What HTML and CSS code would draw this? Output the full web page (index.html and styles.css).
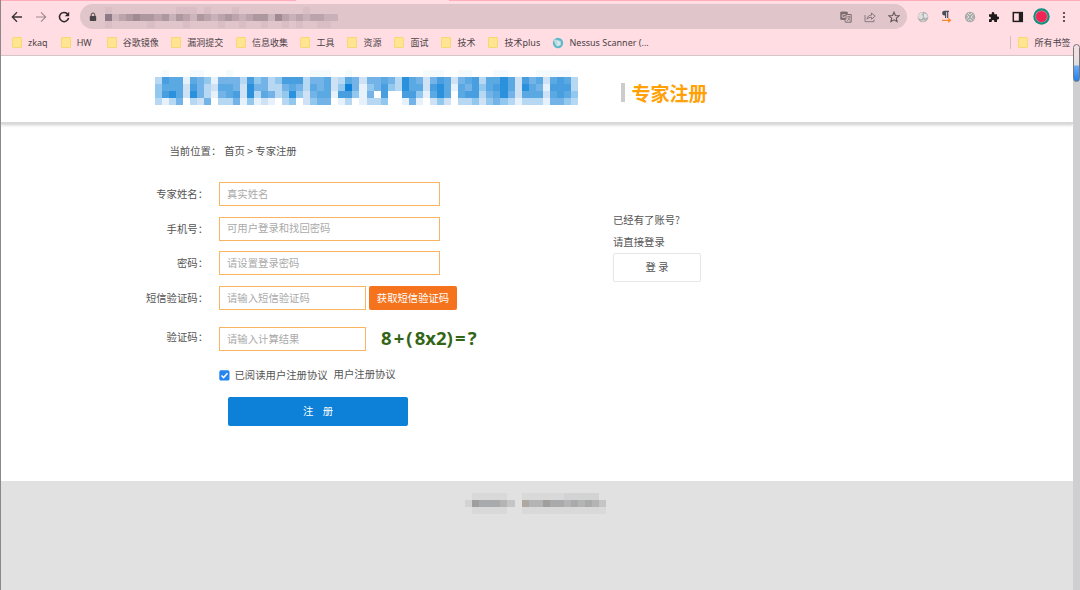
FILE: index.html
```html
<!DOCTYPE html>
<html lang="zh-CN">
<head>
  <meta charset="utf-8">
  <title>专家注册</title>
  <link rel="stylesheet" href="styles.css">
</head>
<body>
  <div class="browser">
    <div class="tab-edge"></div>
    <div class="toolbar">
      <svg class="nav" width="12" height="12" viewBox="0 0 12 12"><path d="M11 6H1.5M6 1.3L1.3 6L6 10.7" fill="none" stroke="#3a3236" stroke-width="1.3"/></svg>
      <svg class="nav" width="12" height="12" viewBox="0 0 12 12"><path d="M1 6H10.5M6 1.3L10.7 6L6 10.7" fill="none" stroke="#a08c92" stroke-width="1.2"/></svg>
      <svg class="nav" width="12" height="12" viewBox="0 0 12 12"><path d="M9.8 3.3A4.6 4.6 0 1 0 10.6 7" fill="none" stroke="#2f292c" stroke-width="1.5"/><path d="M11.2 0.8V5.2H6.8z" fill="#2f292c"/></svg>
      <div class="address">
        <svg width="8" height="10" viewBox="0 0 8 10"><rect x="0.8" y="4" width="6.4" height="5" rx="0.8" fill="#4a4347"/><path d="M2.2 4.5V2.8a1.8 1.8 0 0 1 3.6 0V4.5" fill="none" stroke="#4a4347"/></svg>
        <svg class="mosaic" id="url" width="240" height="25"></svg>
        <div class="address-icons">
          <svg width="12" height="12" viewBox="0 0 12 12"><rect x="0.5" y="0.7" width="7.3" height="8" rx="0.8" fill="#7a6d71"/><path d="M5.5 3.5H11.2V11.2H5.5L4.8 9" fill="#e0c5cb" stroke="#7a6d71"/><rect x="0.5" y="0.7" width="6" height="8" rx="0.8" fill="#7a6d71"/><text x="1.4" y="7" class="tr-g">G</text><path d="M7 5.8H10.5M8.8 4.8V6M9.8 6C9.2 8 8.4 9 7 9.8M7.8 7L10.3 9.8" fill="none" stroke="#7a6d71" stroke-width="0.8"/></svg>
          <svg width="12" height="12" viewBox="0 0 12 12"><path d="M1 4V10.7H10V8.5" fill="none" stroke="#8a7b80"/><path d="M3 8.2C3.3 5.5 5 4.2 7.5 4.1V2L11.2 5.2L7.5 8.2V6.3C5.5 6.2 4.2 6.8 3 8.2z" fill="none" stroke="#7a6d71" stroke-width="0.9"/></svg>
          <svg width="12" height="12" viewBox="0 0 12 12"><path d="M6 1.2L7.4 4.5L11 4.8L8.3 7.1L9.1 10.7L6 8.8L2.9 10.7L3.7 7.1L1 4.8L4.6 4.5z" fill="none" stroke="#62575b" stroke-width="1.1"/></svg>
        </div>
      </div>
      <div class="extensions">
        <svg width="12" height="12" viewBox="0 0 12 12"><circle cx="6" cy="6" r="5.3" fill="#b0afb0"/><path d="M1.2 4C3 1.5 5 1 6 1.2L5 4L6.5 6L4 8.5L1.3 7z" fill="#dedede"/><path d="M7 2.2L10 3.5L10.8 6L8 7.5L6.8 5z" fill="#e4e4e4"/><path d="M4 9.2L7.5 8.5L8.5 10L5.5 11z" fill="#ccc"/></svg>
        <svg width="12" height="13" viewBox="0 0 12 13"><path d="M9 0.8H4.5A2.4 2.4 0 0 0 4.5 5.6H5V8H6.2V1.9H7.1V8H8.3V1.9H9z" fill="#47505a"/><path d="M2 10.3H10.2M8.2 8.4L10.4 10.3L8.2 12.2" fill="none" stroke="#f78b28" stroke-width="1.3"/></svg>
        <svg width="12" height="12" viewBox="0 0 12 12"><circle cx="6" cy="6" r="5.2" fill="#a9aaa9"/><path d="M2.5 3.8L5 6L2.5 8.2M9.5 3.8L7 6L9.5 8.2M4 2.3L6 3.7L8 2.3M4 9.7L6 8.3L8 9.7" fill="none" stroke="#e0e0e0"/></svg>
        <svg width="12" height="12" viewBox="0 0 12 12"><path d="M1 3.2H3.7V2.4a1.3 1.3 0 0 1 2.6 0V3.2H9V5.6H9.7a1.4 1.4 0 0 1 0 2.8H9V11H6.3V10.2a1.3 1.3 0 0 0-2.6 0V11H1V8.3H1.6a1.3 1.3 0 0 0 0-2.6H1z" fill="#1f1b1d"/></svg>
        <svg width="12" height="12" viewBox="0 0 12 12"><rect x="1.3" y="1.6" width="9" height="8.8" fill="none" stroke="#231f21" stroke-width="1.5"/><rect x="6.8" y="1.6" width="3.8" height="8.8" fill="#231f21"/></svg>
        <svg class="avatar" width="17" height="17" viewBox="0 0 17 17"><circle cx="8.5" cy="8.5" r="8.2" fill="#168f80"/><circle cx="8.5" cy="8.5" r="6" fill="#d9a6a8"/><circle cx="8.5" cy="8.5" r="5.5" fill="#f02455"/></svg>
        <svg class="more" width="4" height="12" viewBox="0 0 4 12"><circle cx="2" cy="2" r="1.1" fill="#3b3437"/><circle cx="2" cy="6" r="1.1" fill="#3b3437"/><circle cx="2" cy="10" r="1.1" fill="#3b3437"/></svg>
      </div>
    </div>
    <div class="bookmarks">
      <span class="mark w1"><i class="folder"></i>zkaq</span>
      <span class="mark w2"><i class="folder"></i>HW</span>
      <span class="mark w3"><i class="folder"></i>谷歌镜像</span>
      <span class="mark w3"><i class="folder"></i>漏洞提交</span>
      <span class="mark w3"><i class="folder"></i>信息收集</span>
      <span class="mark w4"><i class="folder"></i>工具</span>
      <span class="mark w4"><i class="folder"></i>资源</span>
      <span class="mark w4"><i class="folder"></i>面试</span>
      <span class="mark w4"><i class="folder"></i>技术</span>
      <span class="mark w5"><i class="folder"></i>技术plus</span>
      <span class="mark"><svg class="nessus" width="12" height="12" viewBox="0 0 12 12"><circle cx="6" cy="6" r="5.2" fill="#5fb9c9"/><path d="M1 2L6 3.2A3 3 0 1 1 3.2 7L2 4z" fill="#b9dce2"/><path d="M5 4.5L8 6.5L5.5 8" fill="none" stroke="#eef4f6"/></svg>Nessus Scanner (...</span>
      <span class="mark all"><i class="folder"></i>所有书签</span>
    </div>
  </div>

  <div class="view">
    <div class="page">
      <div class="header">
        <svg class="mosaic" id="logo" width="426" height="36"></svg>
        <span class="divider"></span>
        <h1>专家注册</h1>
      </div>
      <div class="main">
        <div class="crumb">当前位置：<span>首页 &gt; 专家注册</span></div>
        <div class="columns">
          <form class="form">
            <div class="row">
              <label>专家姓名：</label>
              <input type="text" placeholder="真实姓名">
            </div>
            <div class="row">
              <label>手机号：</label>
              <input type="text" placeholder="可用户登录和找回密码">
            </div>
            <div class="row">
              <label>密码：</label>
              <input type="password" placeholder="请设置登录密码">
            </div>
            <div class="row sms">
              <label>短信验证码：</label>
              <input type="text" class="short" placeholder="请输入短信验证码">
              <button type="button" class="get-code">获取短信验证码</button>
            </div>
            <div class="row captcha-row">
              <label>验证码：</label>
              <input type="text" class="short" placeholder="请输入计算结果">
              <span class="captcha"><span class="wide">8+(</span>8x2<span class="wide">)=?</span></span>
            </div>
            <div class="agree">
              <svg width="11" height="11" viewBox="0 0 11 11"><rect x="0.3" y="0.3" width="10.2" height="10.2" rx="1.6" fill="#2585ee"/><path d="M2.5 5.5L4.6 7.6L8.5 3.3" fill="none" stroke="#fff" stroke-width="1.5"/></svg>
              <span>已阅读用户注册协议</span>
              <span class="terms">用户注册协议</span>
            </div>
            <button type="button" class="submit">注&nbsp;&nbsp; 册</button>
          </form>
          <div class="login">
            <p>已经有了账号?</p>
            <p>请直接登录</p>
            <button type="button" class="login-btn">登 录</button>
          </div>
        </div>
      </div>
      <div class="footer">
        <svg class="mosaic" id="copyright" width="142" height="22"></svg>
      </div>
    </div>
    <div class="scrollbar"><div class="thumb"></div></div>
  </div>
  <script src="script.js"></script>
</body>
</html>
```
FILE: styles.css
```css
* {
  box-sizing: border-box;
}

body {
  margin: 0;
  width: 1080px;
  height: 590px;
  overflow: hidden;
  display: flex;
  flex-direction: column;
  border-left: 1px solid #8d878a;
  background: #fff;
  font-family: "Noto Sans CJK SC", sans-serif;
  font-size: 10.35px;
  color: #555;
}

svg {
  display: block;
  flex: none;
}

.mosaic {
  shape-rendering: crispEdges;
}

button, input {
  font-family: inherit;
  font-size: inherit;
}

/* browser bar */
.browser {
  height: 56px;
  flex: none;
  background: #ffdde3;
  border-bottom: 1px solid #d8c3c8;
}

.tab-edge {
  height: 1px;
  background: linear-gradient(90deg, #ffadba 295px, #ffdde3 295px, #ffdde3 448px, #ffadba 448px);
}

.toolbar {
  display: flex;
  align-items: center;
  height: 31px;
  padding-left: 10px;
}

.nav {
  margin-right: 11.5px;
}

.address {
  display: flex;
  align-items: center;
  width: 827px;
  height: 25px;
  margin-left: -2px;
  padding: 0 7px 0 9px;
  border-radius: 13px;
  background: #e0c5cb;
}

.address .mosaic {
  margin-left: 8px;
}

.address-icons {
  display: flex;
  gap: 12px;
  margin-left: auto;
}

.tr-g {
  font: bold 6px "Liberation Sans", sans-serif;
  fill: #e0c5cb;
}

.extensions {
  display: flex;
  align-items: center;
  gap: 11.8px;
  margin-left: 10px;
}

.avatar {
  margin-left: -2px;
}

.more {
  margin-left: 0;
}

.bookmarks {
  display: flex;
  align-items: center;
  height: 21px;
  padding: 0 2px 0 11px;
  font-size: 9px;
  font-family: "Noto Sans", "Noto Sans CJK SC", sans-serif;
  color: #4b4246;
}

.mark {
  display: flex;
  align-items: center;
  white-space: nowrap;
}

.folder {
  width: 10px;
  height: 11px;
  margin-right: 6px;
  border: 1px solid #f5d873;
  border-radius: 1px;
  background: #ffe591;
}

.w1 { width: 48.7px; }
.w2 { width: 46px; }
.w3 { width: 64.6px; }
.w4 { width: 47px; }
.w5 { width: 64px; }

.nessus {
  margin-right: 5px;
}

.all {
  margin-left: auto;
  padding-left: 7px;
  border-left: 1px solid #d3bdc3;
  margin-right: 7.5px;
}

/* page */
.view {
  display: flex;
  flex: 1;
  min-height: 0;
}

.page {
  display: flex;
  flex-direction: column;
  flex: 1;
}

.header {
  display: flex;
  align-items: flex-start;
  height: 68px;
  padding: 14px 0 0 154px;
  border-bottom: 2px solid #d8d9d8;
  box-shadow: 0 1px 3px #ccc;
}

.divider {
  width: 4px;
  height: 19px;
  margin: 13px 7px 0 39.5px;
  background: #ccc;
}

h1 {
  margin: 9px 0 0;
  font-size: 19px;
  line-height: 28px;
  font-weight: bold;
  color: #ffa107;
}

.main {
  height: 357px;
  padding-top: 19px;
}

.crumb {
  padding-left: 168.5px;
  line-height: 16px;
}

.crumb span {
  margin-left: 3px;
}

.columns {
  display: flex;
  padding-top: 23px;
}

.form {
  width: 612px;
}

.row {
  display: flex;
  align-items: center;
  height: 24px;
  margin-bottom: 10.7px;
}

.row label {
  width: 207px;
  margin-right: 11px;
  padding-bottom: 1px;
  text-align: right;
}

.row input {
  width: 220.5px;
  height: 24px;
  padding: 0 7px 2px;
  border: 1px solid #fbb461;
  border-radius: 0;
  background: #fff;
}

.row input::placeholder {
  color: #aaa;
}

.row .short {
  width: 147px;
}

.sms {
  margin-bottom: 17px;
}

.captcha-row {
  margin-bottom: 18px;
}

.captcha-row label {
  padding-bottom: 5px;
}

.get-code {
  width: 88px;
  height: 24px;
  margin-left: 3px;
  padding: 0 0 2px;
  border: 0;
  border-radius: 2px;
  background: #f4731c;
  color: #fff;
}

.captcha {
  margin-left: 15px;
  padding-bottom: 3px;
  font: bold 18.5px "Noto Sans", sans-serif;
  color: #336516;
}

.wide {
  letter-spacing: 2.1px;
}

.agree {
  display: flex;
  align-items: center;
  height: 12px;
  padding-left: 218px;
}

.agree span {
  margin-left: 4.5px;
  padding-bottom: 2px;
}

.agree .terms {
  margin-left: 6px;
  padding-bottom: 4px;
}

.submit {
  display: block;
  width: 180px;
  height: 29px;
  margin: 16px 0 0 227px;
  padding: 0 0 2px;
  border: 0;
  border-radius: 2px;
  background: #0d80d8;
  color: #fff;
  word-spacing: 0.8px;
}

.login {
  padding-top: 27px;
}

.login p {
  margin: 0;
  line-height: 22px;
}

.login-btn {
  width: 88px;
  height: 29px;
  padding: 0 0 2px;
  border: 1px solid #e6e6e6;
  border-radius: 2px;
  background: #fff;
  color: #555;
}

.footer {
  flex: 1;
  padding: 12px 0 0 464px;
  background: #e1e1e1;
}

.scrollbar {
  position: relative;
  width: 7px;
  background: #cfcfd1;
}

.thumb {
  position: absolute;
  left: 0;
  top: -12px;
  width: 7px;
  height: 38px;
  border: 1px solid #77777a;
  border-radius: 4px;
  background: linear-gradient(#f2dfe3 10px, #ddd 20px, #6bacf7 21px, #1c80f3);
}
```
FILE: script.js
```js
// pixelated blocks: one digit per cell, 0 is empty
function mosaic(id, rows, colors, ys, cell) {
  var svg = document.getElementById(id);
  rows.forEach(function(row, r) {
    row.split("").forEach(function(c, i) {
      if (c === "0") return;
      var rect = document.createElementNS("http://www.w3.org/2000/svg", "rect");
      rect.setAttribute("x", i * cell);
      rect.setAttribute("y", ys[r]);
      rect.setAttribute("width", cell + 0.05);
      rect.setAttribute("height", ys[r + 1] - ys[r]);
      rect.setAttribute("fill", colors[c]);
      svg.appendChild(rect);
    });
  });
}

mosaic("logo", [
  "0a000aa000a00000000000aaa00a0000000000aaa00aa000aa0000aaaaa0",
  "376616541555374534777355623652556538652576256736686275626763",
  "466627532665285533565365624951457438662786165746786286517773",
  "478628531567283653484256617741507007741686067735685266626764",
  "313503250335141210340245501301334001510242033424543133315543"
], {
  a: "#f5fafd", 1: "#e6f1fb", 2: "#cfe2f5", 3: "#b6d8f3", 4: "#92c8ee",
  5: "#74b3e7", 6: "#5ba9e2", 7: "#489edf", 8: "#2c91dc", 9: "#0d82d8"
}, [0, 7, 14, 21, 28, 35], 7.05);

mosaic("url", [
  "100000000011101000100000000010000",
  "724565545354254345434552643434433",
  "100000100001000010010010010100110"
], {
  1: "#d9bec5", 2: "#cdb5bc", 3: "#c9b1b9", 4: "#bda4ac", 5: "#ae989f", 6: "#a08b92", 7: "#8d7a84"
}, [3, 10, 17, 24], 7.07);

mosaic("copyright", [
  "01111100111111222220",
  "26555430744655454543",
  "01111100111111111111"
], {
  1: "#d9d9d9", 2: "#d2d3d2", 3: "#c4c5c4", 4: "#b4b4b4", 5: "#a9aaab", 6: "#a19f9e", 7: "#afa89e"
}, [0, 7, 14, 21], 7.07);
```
